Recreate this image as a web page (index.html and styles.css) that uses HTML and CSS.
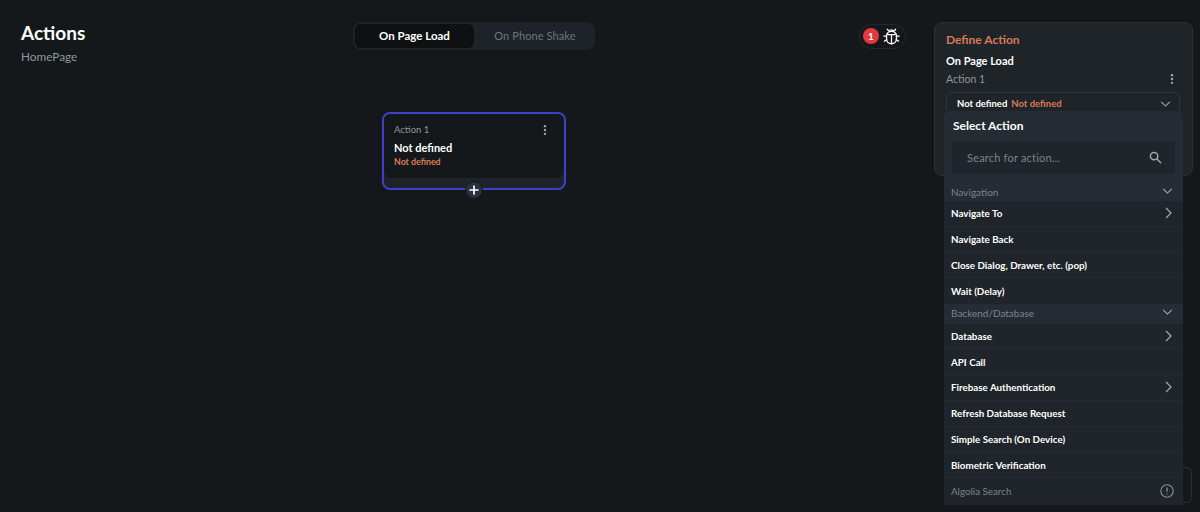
FILE: index.html
```html
<!DOCTYPE html>
<html>
<head>
    <title>Actions</title>
    <link rel="stylesheet" href="styles.css">
</head>
<body>
<div class="page">
    <!-- Canvas -->
    <div class="canvas">
        <div class="top-row">
            <div class="title-block">
                <h1>Actions</h1>
                <p>HomePage</p>
            </div>
            <div class="tabs">
                <div class="tab tab-active">On Page Load</div>
                <div class="tab">On Phone Shake</div>
            </div>
            <div class="bug-col">
                <div class="bug-pill">
                    <span class="bug-count">1</span>
                    <svg class="bug-icon" viewBox="0 0 20 20" fill="none" stroke="#fff" stroke-width="1.4" stroke-linecap="round">
                        <rect x="4.8" y="4.6" width="10.4" height="13" rx="5"/>
                        <path d="M10 8v9.4M7.6 4.9C8 3.6 9 3 10 3s2 .6 2.4 1.9M5.6 6.8L6.6 8h6.8l1-1.2M6.7 3.7L5.6 2.3M13.3 3.7l1.1-1.4M4.8 9.6H2M15.2 9.6H18M5 13.4L2.600 14.8M15 13.4l2.4 1.4"/>
                    </svg>
                </div>
            </div>
        </div>
        <div class="node">
            <div class="node-body">
                <div class="node-head">
                    <span>Action 1</span>
                    <svg class="dots" viewBox="0 0 4 14" fill="#a0a7ae"><circle cx="2" cy="2.5" r="1.4"/><circle cx="2" cy="7" r="1.4"/><circle cx="2" cy="11.5" r="1.4"/></svg>
                </div>
                <div class="node-name">Not defined</div>
                <div class="node-sub">Not defined</div>
            </div>
            <div class="node-add">
                <svg viewBox="0 0 10 10" stroke="#fff" stroke-width="1.7" stroke-linecap="round"><path d="M5 1v8M1 5h8"/></svg>
            </div>
        </div>
    </div>

    <!-- Right side panel -->
    <div class="side">
        <div class="panel">
            <div class="panel-title">Define Action</div>
            <div class="panel-trigger">On Page Load</div>
            <div class="panel-action">
                <span>Action 1</span>
                <svg class="dots" viewBox="0 0 4 14" fill="#a0a7ae"><circle cx="2" cy="2.5" r="1.4"/><circle cx="2" cy="7" r="1.4"/><circle cx="2" cy="11.5" r="1.4"/></svg>
            </div>
            <div class="panel-select">
                <span class="select-name">Not defined</span>
                <span class="select-sub">Not defined</span>
                <svg class="chev-down" viewBox="0 0 12 7" fill="none" stroke="#a3abb3" stroke-width="1.2"><path d="M1 1l5 5 5-5"/></svg>
            </div>
        </div>
        <div class="ghost-box"></div>

        <!-- Dropdown over the panel -->
        <div class="menu">
            <div class="menu-head">
                <div class="menu-title">Select Action</div>
                <div class="menu-search">
                    <span>Search for action...</span>
                    <svg viewBox="0 0 14 14" fill="none" stroke="#a0a7ae" stroke-width="1.6" stroke-linecap="round"><circle cx="5.5" cy="5.5" r="4"/><path d="M8.6 8.6l4 4"/></svg>
                </div>
            </div>
            <div class="section">Navigation<svg class="chev-down" viewBox="0 0 12 7" fill="none" stroke="#a3abb3" stroke-width="1.2"><path d="M1 1l5 5 5-5"/></svg></div>
            <div class="item">Navigate To<svg class="chev-right" viewBox="0 0 7 12" fill="none" stroke="#a3abb3" stroke-width="1.2"><path d="M1 1l5 5-5 5"/></svg></div>
            <div class="item">Navigate Back</div>
            <div class="item">Close Dialog, Drawer, etc. (pop)</div>
            <div class="item item-last">Wait (Delay)</div>
            <div class="section section-tall">Backend/Database<svg class="chev-down" viewBox="0 0 12 7" fill="none" stroke="#a3abb3" stroke-width="1.2"><path d="M1 1l5 5 5-5"/></svg></div>
            <div class="item">Database<svg class="chev-right" viewBox="0 0 7 12" fill="none" stroke="#a3abb3" stroke-width="1.2"><path d="M1 1l5 5-5 5"/></svg></div>
            <div class="item">API Call</div>
            <div class="item">Firebase Authentication<svg class="chev-right" viewBox="0 0 7 12" fill="none" stroke="#a3abb3" stroke-width="1.2"><path d="M1 1l5 5-5 5"/></svg></div>
            <div class="item">Refresh Database Request</div>
            <div class="item">Simple Search (On Device)</div>
            <div class="item">Biometric Verification</div>
            <div class="item item-off">Algolia Search
                <svg class="info" viewBox="0 0 14 14" fill="none" stroke="#8a9198" stroke-width="1.1"><circle cx="7" cy="7" r="6.2"/><path d="M7 3.6v4.2M7 9.4v1" stroke-width="1.3"/></svg>
            </div>
        </div>
    </div>
</div>
</body>
</html>
```

FILE: styles.css
```css
/* Page */
body {
    margin: 0;
    padding: 0;
    font-family: "Lato", "Liberation Sans", sans-serif;
    background-color: #14181b;
    color: #fff;
}

.page {
    display: flex;
    height: 512px;
    overflow: hidden;
}

/* Canvas */
.canvas {
    width: 948px;
    flex-shrink: 0;
    display: flex;
    flex-direction: column;
    align-items: center;
}

.top-row {
    width: 100%;
    display: grid;
    grid-template-columns: 1fr 242px 1fr;
    padding-top: 22px;
    height: 112px;
    box-sizing: border-box;
}

.title-block {
    padding-left: 21px;
}

.title-block h1 {
    margin: 0;
    font-size: 19px;
    line-height: 22px;
    font-weight: 700;
}

.title-block p {
    margin: 5px 0 0;
    font-size: 11.8px;
    line-height: 16px;
    color: #8f969d;
}

/* Tabs */
.tabs {
    display: flex;
    height: 28px;
    padding: 2px;
    box-sizing: border-box;
    background-color: #1d2328;
    border-radius: 8px;
}

.tab {
    flex: 1;
    display: flex;
    align-items: center;
    justify-content: center;
    padding: 0 0 2px 3px;
    font-size: 11px;
    letter-spacing: 0.1px;
    color: #6f767d;
    border-radius: 6px;
}

.tab-active {
    flex: none;
    width: 119px;
    padding-left: 0;
    background-color: #0e1012;
    color: #fff;
    font-size: 11.5px;
    letter-spacing: 0;
    font-weight: 700;
}

/* Bug pill */
.bug-col {
    display: flex;
    justify-content: flex-end;
    padding-right: 42px;
    padding-top: 2px;
    align-items: flex-start;
}

.bug-pill {
    display: flex;
    align-items: center;
    gap: 3px;
    width: 47px;
    height: 25px;
    box-sizing: border-box;
    padding: 0 0 1px 3px;
    border: 1px solid #23292f;
    border-radius: 13px;
}

.bug-count {
    width: 16px;
    height: 16px;
    border-radius: 50%;
    background-color: #e5383f;
    font-size: 10px;
    font-weight: 700;
    display: flex;
    align-items: center;
    justify-content: center;
}

.bug-icon {
    width: 19px;
    height: 19px;
}

/* Node */
.node {
    position: relative;
    width: 184px;
    height: 78px;
    box-sizing: border-box;
    border: 2px solid #3f3fce;
    border-radius: 8px;
    background-color: #1d2328;
}

.node-body {
    height: 64px;
    box-sizing: border-box;
    padding: 9px 10px 0;
    background-color: #14181b;
    border-radius: 6px 6px 8px 8px;
}

.node-head {
    display: flex;
    justify-content: space-between;
    align-items: center;
    font-size: 9.5px;
    line-height: 14px;
    color: #8f969d;
    padding-bottom: 4px;
}

.dots {
    width: 4px;
    height: 12px;
    margin-right: 7px;
}

.node-name {
    font-size: 11px;
    line-height: 14px;
    font-weight: 700;
}

.node-sub {
    font-size: 8.8px;
    line-height: 13px;
    font-weight: 700;
    color: #d97b55;
}

.node-add {
    position: absolute;
    left: 82px;
    bottom: -10px;
    width: 16px;
    height: 16px;
    border-radius: 50%;
    background-color: #2a313a;
    box-shadow: 0 0 0 1px #14181b;
    display: flex;
    align-items: center;
    justify-content: center;
}

.node-add svg {
    width: 10px;
    height: 10px;
}

/* Side panel */
.side {
    position: relative;
    flex: 1;
    padding-top: 22px;
}

.panel {
    width: 259px;
    height: 154px;
    margin-left: -14px;
    box-sizing: border-box;
    padding: 10px 12px 10px 11px;
    background-color: #1f2429;
    border: 1px solid #2a3036;
    border-radius: 8px;
}

.panel-title {
    font-size: 12px;
    line-height: 14px;
    font-weight: 700;
    color: #d97b55;
}

.panel-trigger {
    margin-top: 7px;
    font-size: 11px;
    line-height: 14px;
    font-weight: 700;
}

.panel-action {
    display: flex;
    justify-content: space-between;
    align-items: center;
    margin-top: 4px;
    font-size: 10.5px;
    line-height: 14px;
    color: #8f969d;
}

.panel-action .dots {
    margin-right: 6px;
}

.panel-select {
    display: flex;
    align-items: center;
    gap: 4px;
    margin-top: 6px;
    height: 28px;
    box-sizing: border-box;
    padding: 0 8px 5px 10px;
    border: 1px solid #2f363d;
    border-radius: 6px;
    font-size: 9.5px;
    font-weight: 700;
}

.select-sub {
    color: #d97b55;
}

.chev-down {
    width: 11px;
    height: 6px;
    margin-left: auto;
}

.chev-right {
    width: 7px;
    height: 12px;
}

/* Box that shows beside the menu */
.ghost-box {
    position: absolute;
    top: 467px;
    left: -4px;
    width: 248px;
    height: 36px;
    box-sizing: border-box;
    border: 1px solid #2a3036;
    border-radius: 6px;
}

/* Select Action menu */
.menu {
    position: absolute;
    top: 111px;
    left: -4px;
    width: 239px;
    padding-bottom: 1px;
    background-color: #1f252a;
    font-size: 9.8px;
    font-weight: 700;
}

.menu-head {
    height: 72px;
    box-sizing: border-box;
    padding: 8px 8px 0;
    background-color: #262c34;
    border-radius: 6px 6px 0 0;
}

.menu-title {
    font-size: 12px;
    line-height: 14px;
    padding: 0 0 8px 1px;
}

.menu-search {
    display: flex;
    align-items: center;
    justify-content: space-between;
    height: 33px;
    padding: 0 13px 0 15px;
    background-color: #1f252a;
    color: #7d848b;
    font-weight: 400;
    font-size: 11px;
    letter-spacing: 0.2px;
}

.menu-search svg {
    width: 13px;
    height: 13px;
}

.section {
    display: flex;
    align-items: center;
    justify-content: space-between;
    height: 18px;
    padding: 0 10px 0 7px;
    background-color: #262c34;
    color: #7d848b;
    font-size: 10px;
    font-weight: 400;
}

.section-tall {
    height: 19.5px;
    padding-bottom: 2px;
    box-sizing: border-box;
}

.section .chev-down {
    margin-bottom: 2px;
}

.item {
    display: flex;
    align-items: center;
    justify-content: space-between;
    height: 25.75px;
    box-sizing: border-box;
    padding: 0 11px 0 7px;
    border-bottom: 1px solid #252b31;
}

.item-last {
    border-bottom: none;
}

.item-off {
    color: #7d848b;
    font-weight: 400;
    border-bottom: none;
    padding-right: 9px;
}

.info {
    width: 14px;
    height: 14px;
}
```
